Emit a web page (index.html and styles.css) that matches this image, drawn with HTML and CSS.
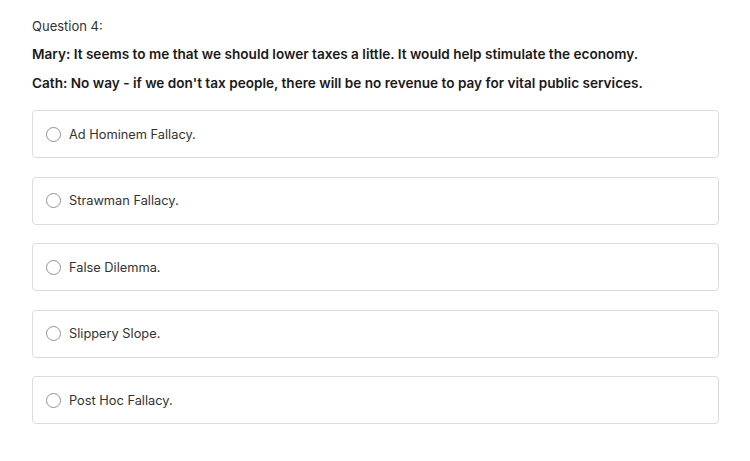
FILE: index.html
```html
<!DOCTYPE html>
<html>
<head>
<meta charset="utf-8">
<link rel="stylesheet" href="styles.css">
</head>
<body>
<div class="question">
  <div class="q-label">Question 4:</div>
  <p class="dialogue">Mary: It seems to me that we should lower taxes a little. It would help stimulate the economy.</p>
  <p class="dialogue">Cath: No way - if we don't tax people, there will be no revenue to pay for vital public services.</p>
  <div class="options">
    <label class="option"><span class="radio"></span><span class="opt-text">Ad Hominem Fallacy.</span></label>
    <label class="option"><span class="radio"></span><span class="opt-text">Strawman Fallacy.</span></label>
    <label class="option"><span class="radio"></span><span class="opt-text">False Dilemma.</span></label>
    <label class="option"><span class="radio"></span><span class="opt-text">Slippery Slope.</span></label>
    <label class="option"><span class="radio"></span><span class="opt-text">Post Hoc Fallacy.</span></label>
  </div>
</div>
</body>
</html>
```

FILE: styles.css
```css
html, body {
  margin: 0;
  padding: 0;
  background: #ffffff;
}
body {
  font-family: Inter, "Noto Sans", sans-serif;
  color: #222;
}
.question {
  padding: 17px 32px 0 32px;
}
.q-label {
  font-size: 13px;
  line-height: 18px;
  color: #333;
  margin-bottom: 10px;
}
.dialogue {
  margin: 0 0 11px 0;
  font-size: 13.6px;
  line-height: 18px;
  font-weight: 600;
  color: #1a1a1a;
}
.options {
  margin-top: 18px;
  display: flex;
  flex-direction: column;
  gap: 18.5px;
}
.option {
  display: flex;
  align-items: center;
  height: 46px;
  border: 1px solid #dcdcdc;
  border-radius: 4px;
  padding-left: 13px;
  width: 672px;
}
.radio {
  width: 15px;
  height: 15px;
  box-sizing: border-box;
  border: 1px solid #8d929b;
  border-radius: 50%;
  margin-right: 8px;
  flex: none;
}
.opt-text {
  font-size: 12.8px;
  color: #333;
}
```
